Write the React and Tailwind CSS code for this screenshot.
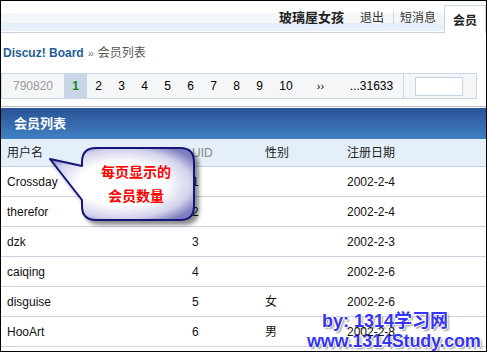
import React from 'react';

const pages = ['2', '3', '4', '5', '6', '7', '8', '9'];

const members = [
  { name: 'Crossday', uid: '1', gender: '', date: '2002-2-4' },
  { name: 'therefor', uid: '2', gender: '', date: '2002-2-4' },
  { name: 'dzk', uid: '3', gender: '', date: '2002-2-3' },
  { name: 'caiqing', uid: '4', gender: '', date: '2002-2-6' },
  { name: 'disguise', uid: '5', gender: '女', date: '2002-2-6' },
  { name: 'HooArt', uid: '6', gender: '男', date: '2002-2-8', front: true },
];

const Callout = () => (
  <>
    <svg className="absolute left-[39px] top-[139px]" width="172" height="94" viewBox="0 0 172 94">
      <defs>
        <radialGradient id="bubbleFill" cx="0.5" cy="0.5" r="0.6">
          <stop offset="0" stopColor="#ffffff" />
          <stop offset="0.5" stopColor="#ffffff" />
          <stop offset="0.8" stopColor="#d2d2ec" />
          <stop offset="1" stopColor="#8080c0" />
        </radialGradient>
        <filter id="bubbleShadow" x="-10%" y="-10%" width="130%" height="130%">
          <feDropShadow dx="4" dy="4" stdDeviation="2.2" floodColor="#000" floodOpacity="0.45" />
        </filter>
      </defs>
      <path
        d="M 10 19 L 42 26 L 42 22 Q 42 8 56 8 L 140 8 Q 154 8 154 22 L 154 66 Q 154 80 140 80 L 56 80 Q 42 80 42 66 L 42 60 Z"
        fill="url(#bubbleFill)"
        stroke="#15157a"
        strokeWidth="2"
        strokeLinejoin="round"
        filter="url(#bubbleShadow)"
      />
    </svg>
    <div className="absolute left-[79px] top-[159px] w-[112px] text-center text-[14px] leading-[24px] font-bold text-[#ff0000]">
      <div>每页显示的</div>
      <div>会员数量</div>
    </div>
  </>
);

const Watermark = () => (
  <div className="absolute left-[306px] top-[310px] z-10 text-[18px] leading-[20px] font-bold text-[#3535f2] whitespace-nowrap [text-shadow:1px_0_0_#fff,-1px_0_0_#fff,0_1px_0_#fff,0_-1px_0_#fff,2px_2px_2px_#999]">
    <div className="ml-[15px]">by: 1314学习网</div>
    <div className="tracking-[-0.2px]">www.1314Study.com</div>
  </div>
);

export default function App() {
  return (
    <div className="relative w-[487px] h-[352px] overflow-hidden border border-black bg-white font-['Liberation_Sans','Noto_Sans_CJK_SC',sans-serif] text-[12px] text-[#222]">
      {/* 顶部导航 */}
      <div className="flex h-[32px] border-b border-[#c9d1de] bg-[linear-gradient(to_bottom,#fdfefe_0,#fdfefe_12px,#f4f6f9_12px,#f4f6f9_22px,#e6f0fa_22px,#e6f0fa_30px,#ffffff_30px)]">
        <span className="ml-auto mt-[10px] h-[14px] leading-[14px] text-[13px] font-bold text-[#222]">玻璃屋女孩</span>
        <span className="ml-[16px] mt-[10px] h-[14px] leading-[14px] text-[#333]">退出</span>
        <span className="ml-[9px] mt-[10px] w-px h-[14px] bg-[#cfd6e0]" />
        <span className="ml-[6px] mt-[10px] h-[14px] leading-[14px] text-[#333]">短消息</span>
        <div className="relative z-10 ml-[8px] mt-[4px] h-[28px] w-[42px] border-x border-t border-[#c5d3e6] bg-white flex items-center justify-center pt-[2px] text-[12px] font-bold text-[#222]">
          会员
        </div>
      </div>

      {/* 导航路径 */}
      <div className="mt-[13px] pl-[2px] h-[14px] leading-[14px] flex items-center">
        <span className="font-bold text-[#1d5e98]">Discuz! Board</span>
        <span className="ml-[4px] text-[#777] text-[11px]">»</span>
        <span className="ml-[4px] text-[#555]">会员列表</span>
      </div>

      {/* 分页 */}
      <div className="mt-[13px] flex h-[26px] w-[476px] border border-[#c9d6e8] bg-[#f5f6f8] text-[12px] text-black">
        <div className="w-[62px] flex items-center justify-center text-[#999]">790820</div>
        <div className="w-[23px] flex items-center justify-center bg-[#c8d6e7] font-bold text-[#0a8a0a]">1</div>
        {pages.map((p) => (
          <div key={p} className="w-[23px] flex items-center justify-center">{p}</div>
        ))}
        <div className="w-[30px] flex items-center justify-center">10</div>
        <div className="w-[39px] flex items-center justify-center text-[11px]">››</div>
        <div className="w-[64px] flex items-center justify-center border-r border-[#c9d6e8]">...31633</div>
        <div className="flex-1 flex items-center pl-[11px]">
          <div className="w-[48px] h-[19px] border border-[#c5d3e6] bg-white" />
        </div>
      </div>

      {/* 会员列表 */}
      <div className="mt-[7px] border-t border-[#b3c0d2] pt-px">
        <div className="h-[31px] flex items-center pl-[13px] bg-[linear-gradient(to_bottom,#2a5296,#3f81c3)] text-[13px] font-bold text-white">
          会员列表
        </div>
        <div className="h-[28px] flex items-center border-b border-[#c4d0e0] bg-[#e5eff9] text-[#222]">
          <div className="w-[191px] pl-[6px]">用户名</div>
          <div className="w-[73px] text-[#888]">UID</div>
          <div className="w-[82px]">性别</div>
          <div>注册日期</div>
        </div>
        {members.map((m) => (
          <div key={m.uid} className="h-[30px] flex items-center border-b border-[#c9d3e3] text-[#111]">
            <div className="w-[191px] pl-[6px]">{m.name}</div>
            <div className="w-[73px]">{m.uid}</div>
            <div className="w-[82px]">{m.gender}</div>
            <div className={m.front ? 'relative z-20' : ''}>{m.date}</div>
          </div>
        ))}
        <div className="h-[30px] border-b border-[#c9d3e3]" />
      </div>

      <Callout />
      <Watermark />
    </div>
  );
}
